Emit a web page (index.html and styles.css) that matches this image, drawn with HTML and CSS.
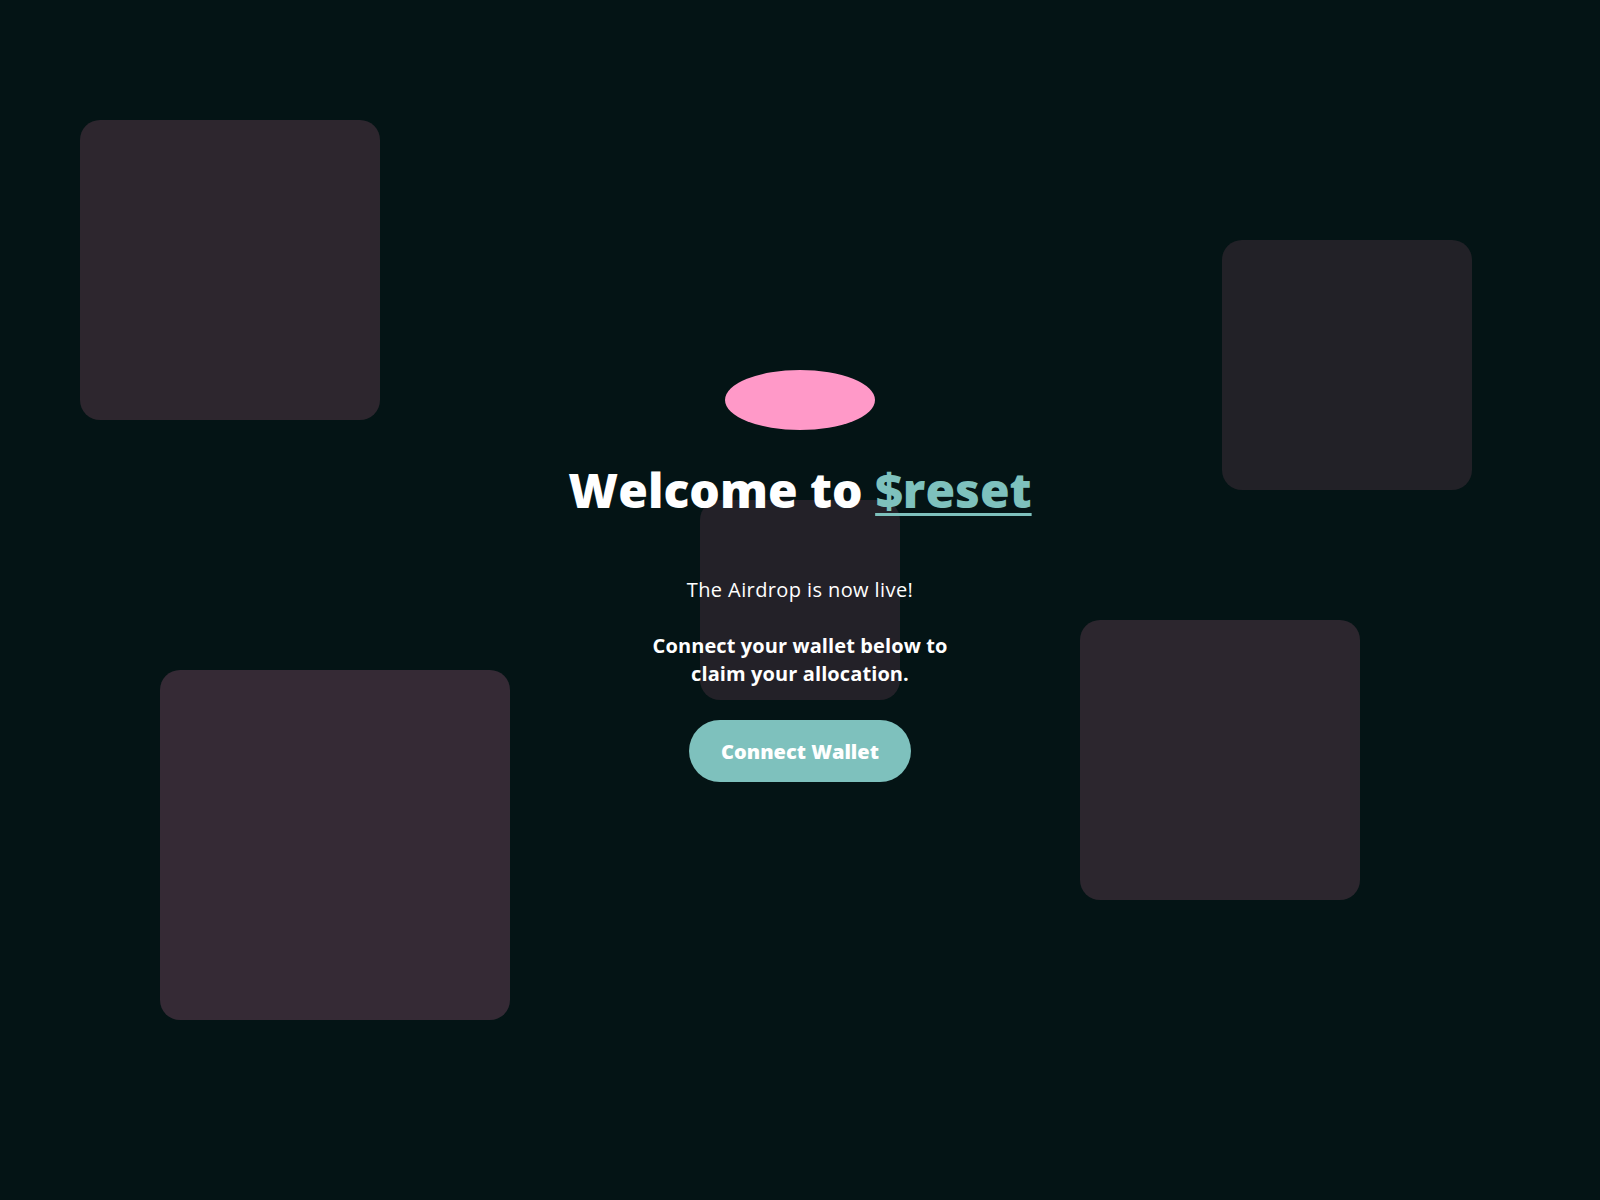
FILE: index.html
```html
<!DOCTYPE html>
<html lang="en">
<head>
<meta charset="utf-8">
<title>Welcome to $reset</title>
<link rel="stylesheet" href="styles.css">
</head>
<body>
<div class="stage">
  <div class="shapes" aria-hidden="true">
    <div class="shape shape-tl"></div>
    <div class="shape shape-tr"></div>
    <div class="shape shape-center"></div>
    <div class="shape shape-bl"></div>
    <div class="shape shape-br"></div>
  </div>
  <main class="hero">
    <div class="blob"></div>
    <h1 class="title">Welcome to <a class="brand" href="#">$reset</a></h1>
    <p class="lead">The Airdrop is now live!</p>
    <p class="cta-text">Connect your wallet below to claim your allocation.</p>
    <button class="connect" type="button">Connect Wallet</button>
  </main>
</div>
</body>
</html>
```
FILE: styles.css
```css
html, body {
  margin: 0;
  padding: 0;
}
body {
  background: #041415;
  color: #ffffff;
  font-family: "Open Sans", "DejaVu Sans", sans-serif;
  overflow: hidden;
}
.stage {
  position: relative;
  width: 1600px;
  height: 1200px;
  overflow: hidden;
}
.shapes {
  position: absolute;
  inset: 0;
}
.shape {
  position: absolute;
  border-radius: 20px;
}
.shape-tl { left: 80px; top: 120px; width: 300px; height: 300px; background: #2d262e; }
.shape-tr { left: 1222px; top: 240px; width: 250px; height: 250px; background: #222127; }
.shape-center { left: 700px; top: 500px; width: 200px; height: 200px; background: #232128; }
.shape-bl { left: 160px; top: 670px; width: 350px; height: 350px; background: #352a35; }
.shape-br { left: 1080px; top: 620px; width: 280px; height: 280px; background: #2c262e; }

.hero {
  position: relative;
  display: flex;
  flex-direction: column;
  align-items: center;
  padding-top: 370px;
  text-align: center;
}
.blob {
  width: 150px;
  height: 60px;
  border-radius: 50%;
  background: #ff99c8;
}
.title {
  margin: 31px 0 0;
  font-size: 48px;
  line-height: 58px;
  font-weight: 800;
  letter-spacing: 0;
}
.brand {
  color: #7ec1bd;
  text-decoration: underline;
  text-decoration-thickness: 3px;
  text-underline-offset: 5px;
}
.lead {
  margin: 57px 0 0;
  font-size: 20px;
  line-height: 28px;
  font-weight: 400;
  letter-spacing: 0.4px;
}
.cta-text {
  margin: 28px 0 0;
  max-width: 320px;
  font-size: 20px;
  line-height: 28px;
  font-weight: 700;
  letter-spacing: 0.1px;
}
.connect {
  margin-top: 32px;
  width: 222px;
  height: 62px;
  border: 0;
  border-radius: 31px;
  background: #7ec1bd;
  color: #ffffff;
  font-family: inherit;
  font-size: 20px;
  font-weight: 800;
  cursor: pointer;
}
```
